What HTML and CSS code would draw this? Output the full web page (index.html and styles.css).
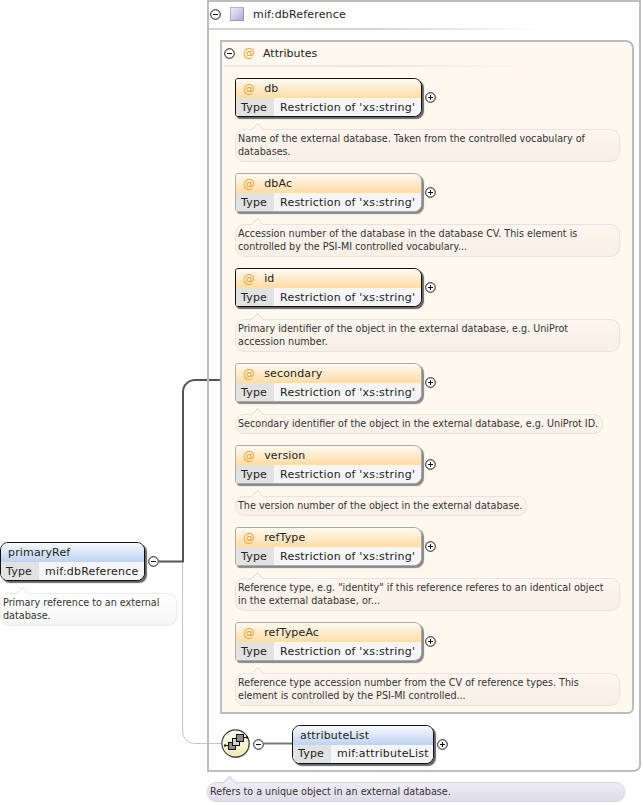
FILE: index.html
```html
<!DOCTYPE html>
<html lang="en">
<head>
<meta charset="utf-8">
<title>mif:dbReference</title>
<link rel="stylesheet" href="styles.css">
</head>
<body>
<main class="canvas">
  <svg class="wires" width="643" height="805" viewBox="0 0 643 805" aria-hidden="true">
    <path class="wire-light" d="M182.5 560V731a12 12 0 0 0 12 12.5H222"/>
    <path class="wire-dark" d="M159 561.5H183V392a12 12 0 0 1 12-12H221"/>
    <path class="wire-double" d="M264 743.5H293"/>
  </svg>

  <section class="type-panel">
    <header class="panel-head">
      <svg class="toggle" viewBox="0 0 11 11"><circle cx="5.5" cy="5.5" r="4.8"/><path d="M3 5.5H8"/></svg>
      <span class="type-icon"></span>
      <span class="panel-title">mif:dbReference</span>
    </header>
    <div class="attrs">
      <header class="attrs-head">
        <svg class="toggle" viewBox="0 0 11 11"><circle cx="5.5" cy="5.5" r="4.8"/><path d="M3 5.5H8"/></svg>
        <span class="at">@</span>
        <span class="attrs-title">Attributes</span>
      </header>

      <article class="attr">
        <div class="attr-row">
          <div class="node attr-node required">
            <div class="node-name"><span class="at">@</span><span>db</span></div>
            <div class="node-type"><span class="type-label">Type</span><span class="type-value">Restriction of 'xs:string'</span></div>
          </div>
          <svg class="toggle plus" viewBox="0 0 11 11"><circle cx="5.5" cy="5.5" r="4.8"/><path d="M3 5.5H8M5.5 3V8"/></svg>
        </div>
        <p class="doc doc-wide">Name of the external database. Taken from the controlled vocabulary of databases.</p>
      </article>

      <article class="attr">
        <div class="attr-row">
          <div class="node attr-node">
            <div class="node-name"><span class="at">@</span><span>dbAc</span></div>
            <div class="node-type"><span class="type-label">Type</span><span class="type-value">Restriction of 'xs:string'</span></div>
          </div>
          <svg class="toggle plus" viewBox="0 0 11 11"><circle cx="5.5" cy="5.5" r="4.8"/><path d="M3 5.5H8M5.5 3V8"/></svg>
        </div>
        <p class="doc doc-wide">Accession number of the database in the database CV. This element is controlled by the PSI-MI controlled vocabulary...</p>
      </article>

      <article class="attr">
        <div class="attr-row">
          <div class="node attr-node required">
            <div class="node-name"><span class="at">@</span><span>id</span></div>
            <div class="node-type"><span class="type-label">Type</span><span class="type-value">Restriction of 'xs:string'</span></div>
          </div>
          <svg class="toggle plus" viewBox="0 0 11 11"><circle cx="5.5" cy="5.5" r="4.8"/><path d="M3 5.5H8M5.5 3V8"/></svg>
        </div>
        <p class="doc doc-wide">Primary identifier of the object in the external database, e.g. UniProt accession number.</p>
      </article>

      <article class="attr">
        <div class="attr-row">
          <div class="node attr-node">
            <div class="node-name"><span class="at">@</span><span>secondary</span></div>
            <div class="node-type"><span class="type-label">Type</span><span class="type-value">Restriction of 'xs:string'</span></div>
          </div>
          <svg class="toggle plus" viewBox="0 0 11 11"><circle cx="5.5" cy="5.5" r="4.8"/><path d="M3 5.5H8M5.5 3V8"/></svg>
        </div>
        <p class="doc">Secondary identifier of the object in the external database, e.g. UniProt ID.</p>
      </article>

      <article class="attr">
        <div class="attr-row">
          <div class="node attr-node">
            <div class="node-name"><span class="at">@</span><span>version</span></div>
            <div class="node-type"><span class="type-label">Type</span><span class="type-value">Restriction of 'xs:string'</span></div>
          </div>
          <svg class="toggle plus" viewBox="0 0 11 11"><circle cx="5.5" cy="5.5" r="4.8"/><path d="M3 5.5H8M5.5 3V8"/></svg>
        </div>
        <p class="doc">The version number of the object in the external database.</p>
      </article>

      <article class="attr">
        <div class="attr-row">
          <div class="node attr-node">
            <div class="node-name"><span class="at">@</span><span>refType</span></div>
            <div class="node-type"><span class="type-label">Type</span><span class="type-value">Restriction of 'xs:string'</span></div>
          </div>
          <svg class="toggle plus" viewBox="0 0 11 11"><circle cx="5.5" cy="5.5" r="4.8"/><path d="M3 5.5H8M5.5 3V8"/></svg>
        </div>
        <p class="doc doc-wide">Reference type, e.g. "identity" if this reference referes to an identical object in the external database, or...</p>
      </article>

      <article class="attr">
        <div class="attr-row">
          <div class="node attr-node">
            <div class="node-name"><span class="at">@</span><span>refTypeAc</span></div>
            <div class="node-type"><span class="type-label">Type</span><span class="type-value">Restriction of 'xs:string'</span></div>
          </div>
          <svg class="toggle plus" viewBox="0 0 11 11"><circle cx="5.5" cy="5.5" r="4.8"/><path d="M3 5.5H8M5.5 3V8"/></svg>
        </div>
        <p class="doc doc-wide">Reference type accession number from the CV of reference types. This element is controlled by the PSI-MI controlled...</p>
      </article>
    </div>

    <div class="sequence-row">
      <div class="compositor">
        <svg viewBox="0 0 30 30" width="30" height="30">
          <defs><linearGradient id="seqfill" x1="0" y1="0" x2="0" y2="1"><stop offset="0" stop-color="#fffff2"/><stop offset="1" stop-color="#efe9b4"/></linearGradient></defs>
          <circle cx="15.3" cy="15.3" r="13.6" fill="#a8a8a0"/>
          <circle cx="14.5" cy="14.5" r="13.6" fill="url(#seqfill)" stroke="#3a3a3a" stroke-width="1.1"/>
          <path d="M4 16.5H7M22 8.5H26" stroke="#111" stroke-width="1"/>
          <rect x="7.5" y="13.5" width="7" height="7" fill="#8f8f8f" stroke="#111"/>
          <rect x="11.5" y="9.5" width="7" height="7" fill="#d0d0d0" stroke="#111"/>
          <rect x="15.5" y="5.5" width="7" height="7" fill="#8f8f8f" stroke="#111"/>
          <rect x="3" y="15.5" width="2" height="2" fill="#111"/>
          <rect x="25" y="7.5" width="2" height="2" fill="#111"/>
        </svg>
      </div>
      <svg class="toggle seq-toggle" viewBox="0 0 11 11"><circle cx="5.5" cy="5.5" r="4.8"/><path d="M3 5.5H8"/></svg>
      <div class="node list-node required">
        <div class="node-name blue">attributeList</div>
        <div class="node-type"><span class="type-label">Type</span><span class="type-value">mif:attributeList</span></div>
      </div>
      <svg class="toggle plus" viewBox="0 0 11 11"><circle cx="5.5" cy="5.5" r="4.8"/><path d="M3 5.5H8M5.5 3V8"/></svg>
    </div>
  </section>

  <p class="doc doc-panel">Refers to a unique object in an external database.</p>

  <section class="root-element">
    <div class="root-row">
      <div class="node root-node required">
        <div class="node-name blue">primaryRef</div>
        <div class="node-type"><span class="type-label">Type</span><span class="type-value">mif:dbReference</span></div>
      </div>
      <svg class="toggle root-toggle" viewBox="0 0 11 11"><circle cx="5.5" cy="5.5" r="4.8"/><path d="M3 5.5H8"/></svg>
    </div>
    <p class="doc doc-root">Primary reference to an external database.</p>
  </section>
</main>
</body>
</html>
```

FILE: styles.css
```css
* { box-sizing: border-box; }
html, body { margin: 0; background: #fff; }
body { font-family: "DejaVu Sans", sans-serif; font-size: 11px; color: #222; }
.canvas { position: relative; width: 643px; height: 805px; overflow: hidden; }
.wires { position: absolute; left: 0; top: 0; fill: none; }
.wire-light { stroke: #c4c4c4; stroke-width: 1; }
.wire-dark { stroke: #555; stroke-width: 2; }
.wire-double { stroke: #777; stroke-width: 2; }

.type-panel {
  position: absolute; left: 207px; top: 0; width: 434px; height: 772px;
  border: 2px solid #bdbdbd; border-bottom-right-radius: 7px;
  padding: 0 0 0 11px;
}
.panel-head, .attrs-head { display: flex; align-items: center; position: relative; }
.panel-head { height: 28px; margin-left: -11px; padding: 0 0 4px 1px; }
.panel-head::after, .attrs-head::after {
  content: ""; position: absolute; left: 0; bottom: 0; height: 2px;
  background: linear-gradient(90deg, #d4d4d4, #d4d4d4 50%, #fff);
}
.panel-head::after { width: 330px; }
.attrs-head::after { width: 310px; background: linear-gradient(90deg, #f0ebe2, #ece7de 50%, #fff8ee); }
.toggle { width: 11px; height: 11px; flex: none; fill: #fff; stroke: #111; stroke-width: 1; }
.type-icon {
  width: 14px; height: 14px; margin-left: 9px;
  background: linear-gradient(135deg, #f0ecf8, #b7a9d6);
  border: 1px solid #b9afd2; border-right-color: #9b8fbd; border-bottom-color: #9b8fbd;
}
.panel-title { margin-left: 9px; letter-spacing: 0.17px; }

.attrs {
  width: 414px; height: 674px; margin-top: 10px;
  background: #fff8ee; border: 2px solid #bdbdbd;
  border-top-right-radius: 8px; border-bottom-right-radius: 6px;
  padding: 0 0 0 2px;
}
.attrs-head { height: 25px; padding: 0 0 3px 0; margin-bottom: 11px; }
.attrs-head .at { margin-left: 8px; }
.attrs-title { margin-left: 8px; }
.at { color: #f0a030; font-size: 12px; }

.attr { margin-left: 11px; margin-bottom: 11px; }
.attr-row { display: flex; align-items: center; gap: 3px; }
.node { border: 1px solid #aaa; background: #eee; overflow: hidden; box-shadow: 2px 2px 1px #888; }
.node.required { border-color: #111; box-shadow: 2px 2px 1px #666; }
.attr-node { width: 187px; height: 39px; border-radius: 3px 8px 8px 3px; }
.node-name {
  height: 19px; display: flex; align-items: center; gap: 9px; padding-left: 7px;
  background: linear-gradient(180deg, #fffaf0, #ffdca3);
  letter-spacing: 0.15px;
}
.node-name.blue { background: linear-gradient(180deg, #f6f9ff, #bdd2f2); }
.node-type { height: 18px; display: flex; align-items: center; background: #f5f5f7; }
.type-label { background: #e2e2e2; height: 100%; display: flex; align-items: center; padding: 0 7px 0 5px; margin-right: 6px; letter-spacing: 0.2px; }
.type-value { letter-spacing: 0.2px; white-space: nowrap; }

.doc {
  position: relative; width: fit-content; margin: 12px 0 0; padding: 2px 4px 3px 2px;
  font-size: 9.62px; line-height: 13px; color: #333;
  background: linear-gradient(180deg, #fdf6ee, #f8efe5); border: 1px solid #ece3d8; border-radius: 9px;
}
.doc::before {
  content: ""; position: absolute; left: 16px; top: -5px; width: 10px; height: 10px;
  background: #fdf6ee; border: 1px solid #e4dbd0; border-right: 0; border-bottom: 0;
  clip-path: polygon(0 0, 100% 0, 0 100%);
  transform: rotate(45deg);
}
.doc-wide { width: 385px; }

.sequence-row { position: absolute; left: 12px; top: 722px; display: flex; align-items: center; height: 40px; }
.compositor { width: 30px; height: 30px; flex: none; }
.compositor svg { display: block; }
.seq-toggle { margin-left: 2px; }
.list-node { width: 142px; height: 39px; margin-left: 28px; border-radius: 8px; }
.sequence-row .plus { margin-left: 3px; }

.doc-panel {
  position: absolute; left: 207px; top: 782px; width: 418px; margin: 0; height: 20px;
  background: linear-gradient(180deg, #eeecf6, #dfdbea); border-color: #d8d4e4;
}
.doc-panel::before { background: #eeecf6; border-color: #d0ccdc; }
.root-element { position: absolute; left: 0; top: 542px; width: 177px; }
.root-row { display: flex; align-items: center; gap: 3px; }
.root-node { width: 145px; height: 39px; flex: none; border-radius: 8px; }
.root-toggle { flex: none; }
.doc-root { width: 177px; background: linear-gradient(180deg, #fff, #f6f6f6); border-color: #ececec; }
.doc-root::before { background: #fff; border-color: #e4e4e4; }
```
